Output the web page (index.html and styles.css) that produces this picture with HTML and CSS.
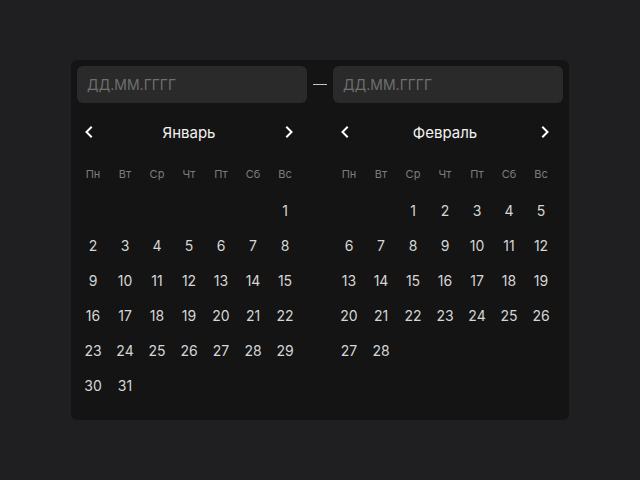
FILE: index.html
```html
<!DOCTYPE html>
<html lang="ru">
<head>
<meta charset="utf-8">
<link rel="stylesheet" href="styles.css">
</head>
<body>
<div class="picker">
  <div class="inputs">
    <div class="field">ДД.ММ.ГГГГ</div>
    <div class="dash"></div>
    <div class="field">ДД.ММ.ГГГГ</div>
  </div>
  <div class="months">
    <div class="month">
      <div class="head">
        <button class="nav"><svg width="10" height="12" viewBox="0 0 10 12"><path d="M7 1.5 L2.5 6 L7 10.5" fill="none" stroke="#fff" stroke-width="2" stroke-linecap="square"/></svg></button>
        <div class="title">Январь</div>
        <button class="nav"><svg width="10" height="12" viewBox="0 0 10 12"><path d="M3 1.5 L7.5 6 L3 10.5" fill="none" stroke="#fff" stroke-width="2" stroke-linecap="square"/></svg></button>
      </div>
      <div class="grid">
        <div class="wd">Пн</div><div class="wd">Вт</div><div class="wd">Ср</div><div class="wd">Чт</div><div class="wd">Пт</div><div class="wd">Сб</div><div class="wd">Вс</div>
        <div class="d"></div><div class="d"></div><div class="d"></div><div class="d"></div><div class="d"></div><div class="d"></div><div class="d">1</div>
        <div class="d">2</div><div class="d">3</div><div class="d">4</div><div class="d">5</div><div class="d">6</div><div class="d">7</div><div class="d">8</div>
        <div class="d">9</div><div class="d">10</div><div class="d">11</div><div class="d">12</div><div class="d">13</div><div class="d">14</div><div class="d">15</div>
        <div class="d">16</div><div class="d">17</div><div class="d">18</div><div class="d">19</div><div class="d">20</div><div class="d">21</div><div class="d">22</div>
        <div class="d">23</div><div class="d">24</div><div class="d">25</div><div class="d">26</div><div class="d">27</div><div class="d">28</div><div class="d">29</div>
        <div class="d">30</div><div class="d">31</div>
      </div>
    </div>
    <div class="month">
      <div class="head">
        <button class="nav"><svg width="10" height="12" viewBox="0 0 10 12"><path d="M7 1.5 L2.5 6 L7 10.5" fill="none" stroke="#fff" stroke-width="2" stroke-linecap="square"/></svg></button>
        <div class="title">Февраль</div>
        <button class="nav"><svg width="10" height="12" viewBox="0 0 10 12"><path d="M3 1.5 L7.5 6 L3 10.5" fill="none" stroke="#fff" stroke-width="2" stroke-linecap="square"/></svg></button>
      </div>
      <div class="grid">
        <div class="wd">Пн</div><div class="wd">Вт</div><div class="wd">Ср</div><div class="wd">Чт</div><div class="wd">Пт</div><div class="wd">Сб</div><div class="wd">Вс</div>
        <div class="d"></div><div class="d"></div><div class="d">1</div><div class="d">2</div><div class="d">3</div><div class="d">4</div><div class="d">5</div>
        <div class="d">6</div><div class="d">7</div><div class="d">8</div><div class="d">9</div><div class="d">10</div><div class="d">11</div><div class="d">12</div>
        <div class="d">13</div><div class="d">14</div><div class="d">15</div><div class="d">16</div><div class="d">17</div><div class="d">18</div><div class="d">19</div>
        <div class="d">20</div><div class="d">21</div><div class="d">22</div><div class="d">23</div><div class="d">24</div><div class="d">25</div><div class="d">26</div>
        <div class="d">27</div><div class="d">28</div>
      </div>
    </div>
  </div>
</div>
</body>
</html>
```
FILE: styles.css
```css
html, body {
  margin: 0;
  padding: 0;
  height: 100%;
}
body {
  background: #1f1f21;
  font-family: Inter, "Noto Sans", sans-serif;
  display: flex;
  align-items: center;
  justify-content: center;
}
.picker {
  width: 498px;
  height: 360px;
  box-sizing: border-box;
  background: #141414;
  border-radius: 6px;
  padding: 6px;
}
.inputs {
  display: flex;
  align-items: center;
}
.field {
  width: 230px;
  height: 37px;
  box-sizing: border-box;
  background: #2a2a2a;
  border-radius: 6px;
  padding-left: 10px;
  display: flex;
  align-items: center;
  color: #6f6f6f;
  font-size: 14px;
}
.dash {
  width: 14px;
  height: 1px;
  background: #c4c4c4;
  margin: 0 6px;
}
.months {
  display: flex;
  gap: 26px;
  margin-top: 13px;
}
.month {
  width: 230px;
}
.head {
  width: 224px;
  height: 32px;
  display: flex;
  align-items: center;
  justify-content: space-between;
}
.nav {
  width: 24px;
  height: 24px;
  padding: 0;
  border: 0;
  background: transparent;
  display: flex;
  align-items: center;
  justify-content: center;
}
.title {
  color: #f2f2f2;
  font-size: 15px;
  font-weight: 400;
}
.grid {
  width: 224px;
  display: grid;
  grid-template-columns: repeat(7, 32px);
  grid-template-rows: 33px;
  grid-auto-rows: 32px;
  row-gap: 3px;
  margin-top: 10px;
}
.wd {
  display: flex;
  align-items: center;
  justify-content: center;
  box-sizing: border-box;
  padding-bottom: 1px;
  color: #7d7d7d;
  font-size: 11px;
}
.d {
  display: flex;
  align-items: center;
  justify-content: center;
  color: #d6d6d6;
  font-size: 14px;
}
```
